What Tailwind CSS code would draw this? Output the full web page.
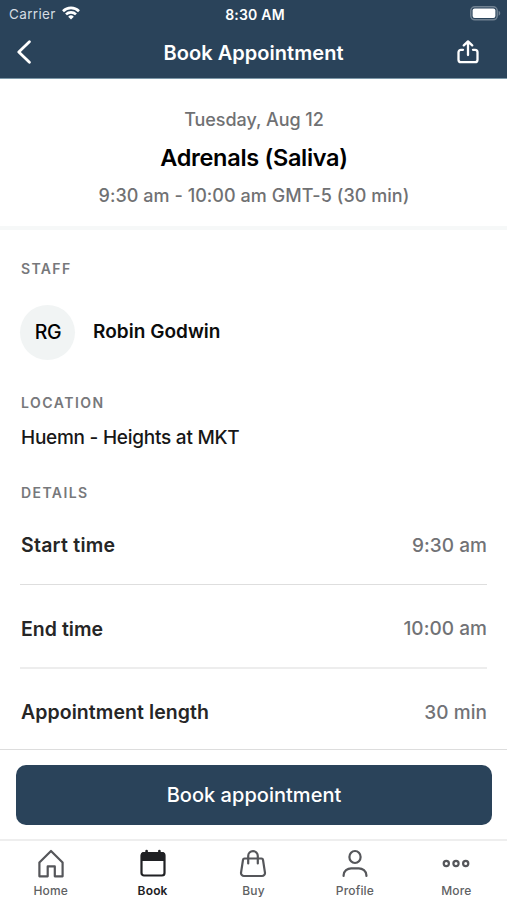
<!DOCTYPE html>
<html lang="en">
<head>
<meta charset="utf-8">
<meta name="viewport" content="width=device-width, initial-scale=1">
<title>Book Appointment</title>
<script src="https://cdn.jsdelivr.net/npm/@tailwindcss/browser@4"></script>
</head>
<body class="bg-white">
<div class="flex h-[900px] w-[507px] flex-col overflow-hidden bg-white font-['Inter','Liberation_Sans',sans-serif] whitespace-nowrap">
  <header class="h-[79px] shrink-0 border-b border-[#7c98a8] bg-[#2a435a] text-white">
    <div class="grid h-[27px] grid-cols-3 items-center pr-[6px] pl-[9px] text-[13px] leading-none">
      <div class="flex items-center gap-[6px] pt-px">
        <span class="pt-px text-[13.5px] tracking-[0.35px] text-[#d5dce2]">Carrier</span>
        <svg class="-mt-[3px] h-[14px] w-[18px]" viewBox="0 0 18 14" fill="none" stroke="#fff" stroke-width="2.6">
          <path d="M1 5.2a11.4 11.4 0 0 1 16 0M4 8.4a7.1 7.1 0 0 1 10 0"/>
          <path d="M9 13.6 6.2 10.7a4 4 0 0 1 5.6 0z" fill="#fff" stroke="none"/>
        </svg>
      </div>
      <span class="pt-[2px] text-center text-[14px] font-semibold tracking-[0.2px]">8:30 AM</span>
      <svg class="justify-self-end" width="31" height="15" viewBox="0 0 31 15">
        <rect x="0.8" y="0.8" width="26.4" height="13" rx="4" fill="none" stroke="#718292" stroke-width="1.5"/>
        <rect x="2.6" y="2.6" width="22.8" height="9.4" rx="2" fill="#fff"/>
        <path d="M28.6 4.8c2.2.8 2.2 4.2 0 5z" fill="#718292"/>
      </svg>
    </div>
    <div class="flex h-[51px] items-center justify-between pr-[28px] pl-[16px]">
      <svg class="-mt-[2px]" width="16" height="24" viewBox="0 0 16 24" fill="none" stroke="#fff" stroke-width="2.8" stroke-linecap="round" stroke-linejoin="round"><path d="M13.400 1.800 2.800 12l10.600 10.200"/></svg>
      <h1 class="pl-[18px] text-[20px] font-semibold tracking-[0.05px]">Book Appointment</h1>
      <svg class="-mt-[2px]" width="22" height="24" viewBox="0 0 22 24" fill="none" stroke="#fff" stroke-width="2.3" stroke-linecap="round" stroke-linejoin="round"><path d="M6 9.800H4a2.500 2.500 0 0 0-2.500 2.500v7.400A2.500 2.500 0 0 0 4 22.200h14a2.500 2.500 0 0 0 2.500-2.500v-7.400A2.500 2.500 0 0 0 18 9.800h-2M11 15V1.600M6.800 5.400 11 1.400l4.200 4"/></svg>
    </div>
  </header>

  <section class="flex h-[151px] shrink-0 flex-col items-center border-b-[4px] border-[#f6f8f8] pt-[27px] pl-px">
    <p class="h-[27px] text-[18px] leading-[27px] font-[450] tracking-[-0.05px] text-[#707173]">Tuesday, Aug 12</p>
    <h2 class="mt-[8px] h-[34px] text-[23.5px] leading-[34px] font-semibold tracking-[-0.3px] text-black">Adrenals (Saliva)</h2>
    <p class="mt-[7px] h-[27px] text-[18px] leading-[27px] font-[450] tracking-[0.05px] text-[#707173]">9:30 am - 10:00 am GMT-5 (30 min)</p>
  </section>

  <main class="h-[519px] shrink-0 overflow-hidden px-[20px] pt-[29px]">
    <h3 class="h-[20px] pl-px text-[14px] leading-[20px] font-semibold tracking-[1.35px] text-[#77787b]">STAFF</h3>
    <div class="mt-[25px] flex h-[56px] items-center">
      <div class="flex size-[55px] items-center justify-center rounded-full bg-[#f1f4f4] pt-px pl-px text-[19.5px] font-[450] tracking-[-0.3px] text-black">RG</div>
      <span class="ml-[18px] pt-px text-[19px] font-semibold tracking-[0.03px] text-[#0c0c0c]">Robin Godwin</span>
    </div>
    <h3 class="mt-[33px] h-[20px] pl-px text-[14px] leading-[20px] font-semibold tracking-[1.5px] text-[#77787b]">LOCATION</h3>
    <p class="mt-[11px] h-[28px] pl-px text-[19px] leading-[28px] font-[450] tracking-[-0.25px] text-[#171717]">Huemn - Heights at MKT</p>
    <h3 class="mt-[31px] h-[20px] pl-px text-[14px] leading-[20px] font-semibold tracking-[1.4px] text-[#77787b]">DETAILS</h3>
    <dl class="tracking-[0.05px]">
      <div class="mt-[2px] flex h-[80px] items-center justify-between border-b border-[#dedede] pt-[3px]">
        <dt class="pl-px text-[19.5px] font-semibold tracking-[0.25px] text-[#262626]">Start time</dt><dd class="text-[19px] font-[450] text-[#717276]">9:30 am</dd>
      </div>
      <div class="flex h-[84px] items-center justify-between border-b-2 border-[#ededed] pt-[7px]">
        <dt class="pl-px text-[19.5px] font-semibold tracking-[0.03px] text-[#262626]">End time</dt><dd class="text-[19px] font-[450] text-[#717276]">10:00 am</dd>
      </div>
      <div class="flex h-[84px] items-center justify-between pt-[4px]">
        <dt class="pl-px text-[19.5px] font-semibold tracking-[0.07px] text-[#262626]">Appointment length</dt><dd class="text-[19px] font-[450] text-[#717276]">30 min</dd>
      </div>
    </dl>
  </main>

  <div class="h-[90px] shrink-0 border-t border-[#dddddd] pt-[15px] pr-[15px] pl-[16px]">
    <button class="flex h-[60px] w-full items-center justify-center rounded-[10px] bg-[#2a435a] text-[20px] font-[450] tracking-[0.03px] text-white">Book appointment</button>
  </div>

  <nav class="grid h-[61px] shrink-0 grid-cols-5 border-t-2 border-[#eeeeee] text-[12px] leading-[16px] font-medium tracking-[0.15px] text-[#606163]">
    <a class="flex flex-col items-center pt-[8px]">
      <svg width="28" height="30" viewBox="0 0 28 30" fill="none" stroke="#55565a" stroke-width="2.2" stroke-linejoin="round"><path d="M2.400 27.300V13.500L14 2l11.600 11.500v13.800h-7.800V17.400h-7.100v9.900z"/></svg>
      <span class="mt-[4px]">Home</span>
    </a>
    <a class="flex flex-col items-center pt-[8px] pl-px font-semibold text-[#202124]">
      <svg width="28" height="30" viewBox="0 0 28 30"><path d="M5 3h18a3 3 0 0 1 3 3v6H2V6a3 3 0 0 1 3-3z" fill="#202124"/><rect x="2.500" y="4" width="23" height="22.500" rx="2.500" fill="none" stroke="#202124" stroke-width="2.200"/><path d="M7.600 2v3M20.400 2v3" stroke="#202124" stroke-width="2.600" stroke-linecap="round"/></svg>
      <span class="mt-[4px]">Book</span>
    </a>
    <a class="flex flex-col items-center pt-[8px]">
      <svg width="28" height="30" viewBox="0 0 28 30" fill="none" stroke="#55565a" stroke-width="2.200" stroke-linecap="round" stroke-linejoin="round"><path d="M5.500 9.500h17a1.500 1.500 0 0 1 1.500 1.300l2 13a3 3 0 0 1-3 3.200H5a3 3 0 0 1-3-3.200l2-13a1.500 1.500 0 0 1 1.500-1.300zM9.200 14.500V7a4.800 4.800 0 0 1 9.600 0v7.500"/></svg>
      <span class="mt-[4px]">Buy</span>
    </a>
    <a class="flex flex-col items-center pt-[8px]">
      <svg width="28" height="30" viewBox="0 0 28 30" fill="none" stroke="#55565a" stroke-width="2.200" stroke-linecap="round"><ellipse cx="14" cy="8" rx="5.600" ry="6"/><path d="M2.600 27v-.7c0-4.400 4-7 7.600-7h7.600c3.600 0 7.600 2.600 7.600 7v.7"/></svg>
      <span class="mt-[4px]">Profile</span>
    </a>
    <a class="flex flex-col items-center pt-[8px]">
      <svg width="28" height="30" viewBox="0 0 28 30" fill="none" stroke="#55565a" stroke-width="2.200"><circle cx="4.300" cy="14.500" r="2.600"/><circle cx="14" cy="14.500" r="2.600"/><circle cx="23.700" cy="14.500" r="2.600"/></svg>
      <span class="mt-[4px]">More</span>
    </a>
  </nav>
</div>
</body>
</html>
